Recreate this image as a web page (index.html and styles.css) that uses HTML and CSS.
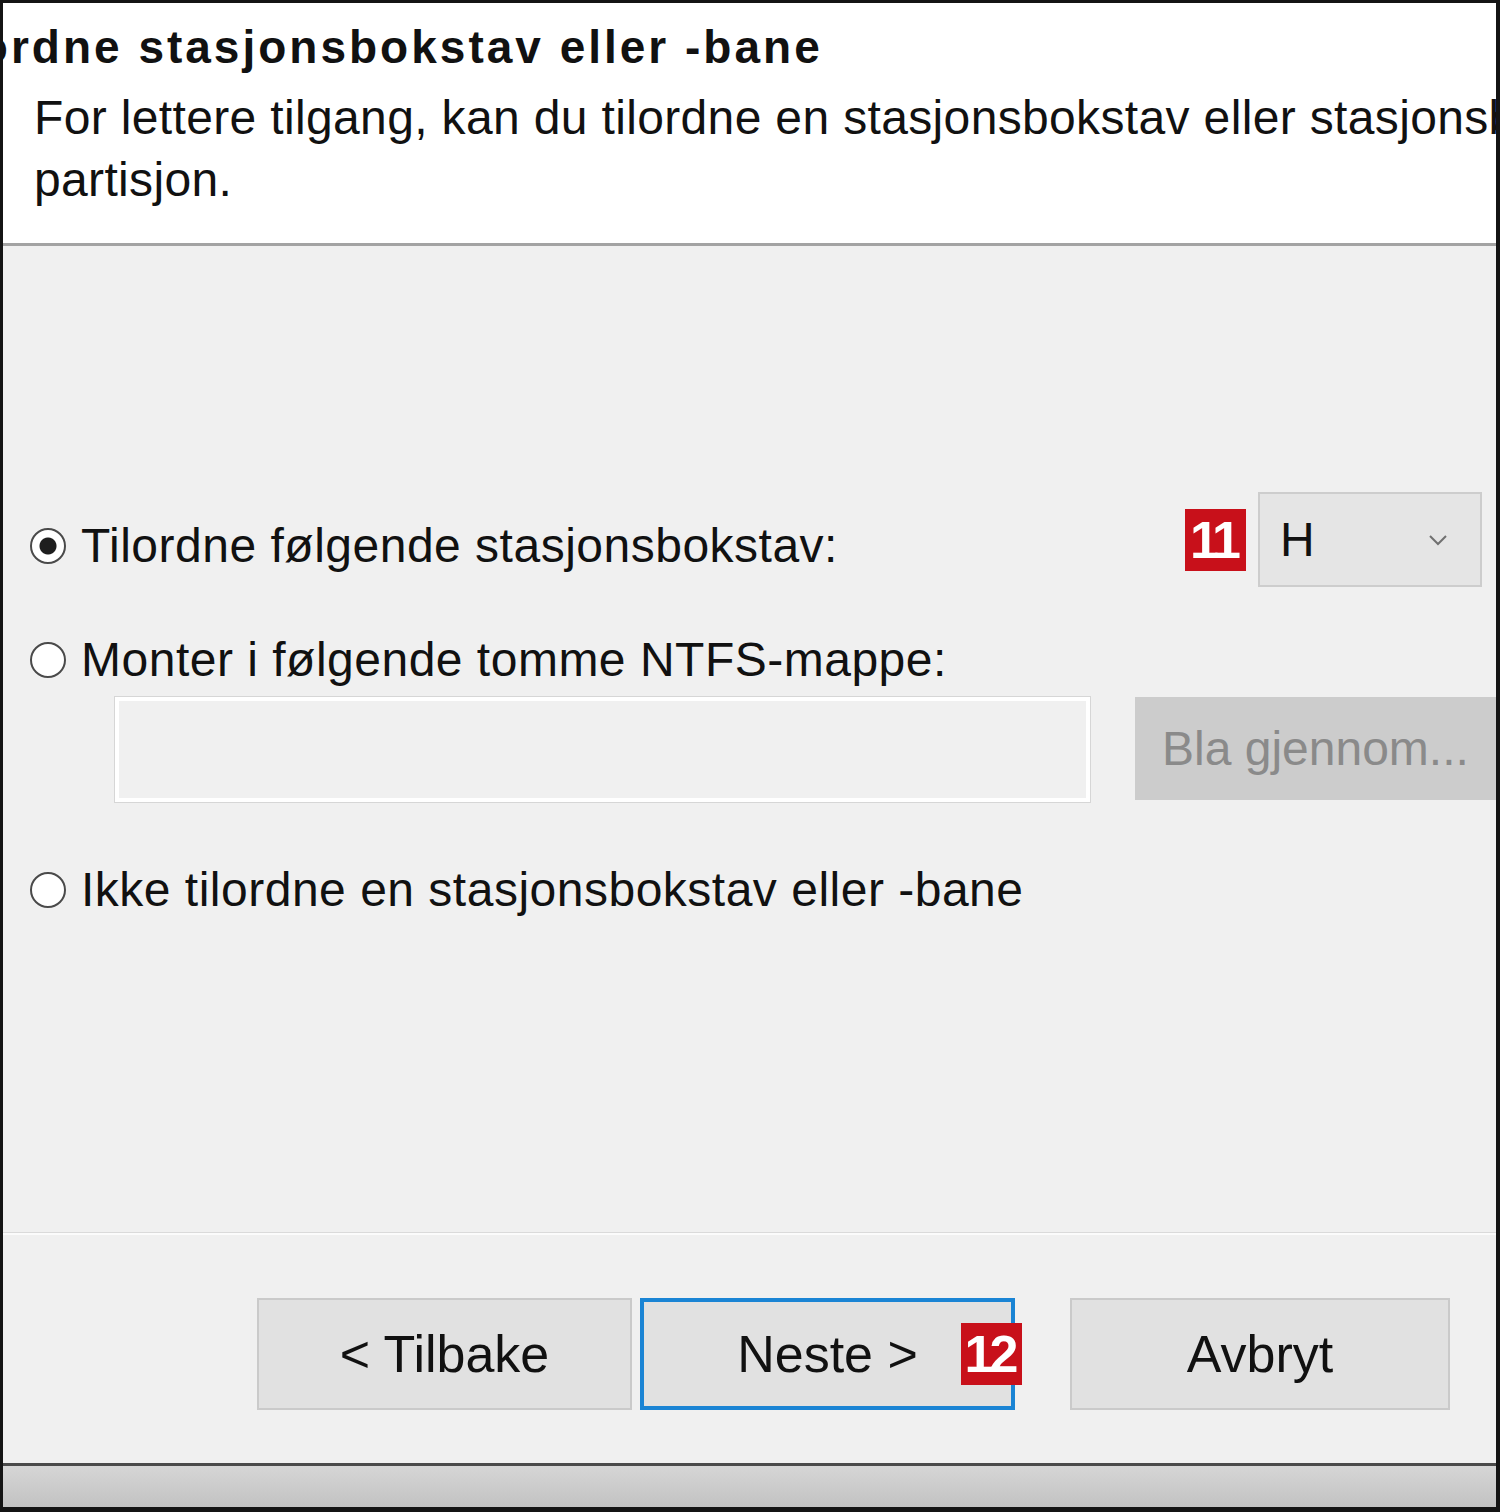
FILE: index.html
```html
<!DOCTYPE html>
<html lang="nb">

<head>
    <meta charset="UTF-8">
    <meta name="viewport" content="width=device-width, initial-scale=1.0">
    <title>Tilordne stasjonsbokstav eller -bane</title>
    <link rel="stylesheet" href="styles.css">
</head>

<body>
    <div class="dialog">
        <header class="head">
            <h1 class="title">Tilordne stasjonsbokstav eller -bane</h1>
            <p class="desc">For lettere tilgang, kan du tilordne en stasjonsbokstav eller stasjonsbane til denne<br>partisjon.</p>
        </header>

        <main class="body">
            <div class="row-letter">
                <label class="opt opt-letter"><span class="radio checked"></span>Tilordne følgende stasjonsbokstav:</label>
                <span class="badge">11</span>
                <div class="combo">
                    <span>H</span>
                    <svg width="20" height="12" viewBox="0 0 20 12"><polyline points="2,2 10,10 18,2" fill="none" stroke="#707070" stroke-width="2"/></svg>
                </div>
            </div>
            <label class="opt opt-mount"><span class="radio"></span>Monter i følgende tomme NTFS-mappe:</label>
            <div class="row-path">
                <div class="path-input"></div>
                <button class="browse">Bla gjennom...</button>
            </div>
            <label class="opt opt-none"><span class="radio"></span>Ikke tilordne en stasjonsbokstav eller -bane</label>
        </main>

        <footer class="foot">
            <button class="btn">&lt; Tilbake</button>
            <button class="btn btn-default">Neste &gt;<span class="badge badge-next">12</span></button>
            <button class="btn btn-cancel">Avbryt</button>
        </footer>

        <div class="taskbar"></div>
    </div>
</body>

</html>
```

FILE: styles.css
```css
body {
    margin: 0;
    padding: 0;
    background: #141414;
}

.dialog {
    width: 1500px;
    height: 1512px;
    box-sizing: border-box;
    border: 3px solid #141414;
    border-right-width: 4px;
    border-bottom-width: 5px;
    display: flex;
    flex-direction: column;
    overflow: hidden;
    background: #f0f0f0;
    font-family: "Liberation Sans", Arial, sans-serif;
    color: #111;
}

/* header */

.head {
    flex: none;
    height: 240px;
    background: #fff;
    border-bottom: 3px solid #a3a3a3;
    overflow: hidden;
    white-space: nowrap;
}

.title {
    margin: 16px 0 0 -85px;
    font-size: 46px;
    line-height: 56px;
    font-weight: bold;
    letter-spacing: 3px;
}

.desc {
    margin: 12px 0 0 31px;
    font-size: 48px;
    line-height: 62px;
    letter-spacing: 0.35px;
}

/* options */

.body {
    flex: 1;
    padding-top: 246px;
}

.row-letter {
    display: flex;
    align-items: center;
    height: 95px;
    padding-right: 14px;
}

.opt {
    display: flex;
    align-items: center;
    gap: 15px;
    padding-left: 27px;
    font-size: 48px;
    line-height: 60px;
    letter-spacing: 0.5px;
    white-space: nowrap;
}

.opt-letter {
    margin-top: 13px;
    margin-right: auto;
}

.opt-mount {
    margin-top: 43px;
}

.opt-none {
    margin-top: 58px;
}

.radio {
    flex: none;
    width: 36px;
    height: 36px;
    box-sizing: border-box;
    border: 2px solid #4a4a4a;
    border-radius: 50%;
    background: #fff;
}

.radio.checked {
    background: radial-gradient(circle, #1e1e1e 0 8px, #fff 9px);
}

.badge {
    flex: none;
    width: 61px;
    height: 62px;
    display: flex;
    align-items: center;
    justify-content: center;
    margin-right: 12px;
    background: #c8101a;
    color: #fff;
    font-weight: bold;
    font-size: 52px;
    letter-spacing: -4px;
    text-indent: -4px;
}

.combo {
    flex: none;
    width: 224px;
    height: 95px;
    box-sizing: border-box;
    display: flex;
    align-items: center;
    justify-content: space-between;
    padding: 0 32px 0 20px;
    border: 2px solid #cdcdcd;
    background: #e5e5e5;
    font-size: 48px;
}

.row-path {
    display: flex;
    gap: 45px;
    margin-top: 7px;
    padding-left: 112px;
}

.path-input {
    flex: none;
    width: 975px;
    height: 105px;
    box-sizing: border-box;
    border: 4px solid #fff;
    box-shadow: 0 0 0 1px #d6d6d6;
    background: #f0f0f0;
}

.browse {
    flex: none;
    width: 400px;
    height: 103px;
    padding: 0 0 0 27px;
    border: none;
    background: #cccccc;
    color: #8a8a8a;
    font: 48px "Liberation Sans", Arial, sans-serif;
    text-align: left;
}

/* buttons */

.foot {
    flex: none;
    height: 231px;
    box-sizing: border-box;
    display: flex;
    justify-content: flex-end;
    align-items: flex-start;
    padding: 65px 46px 0 0;
    border-top: 1px solid #dadada;
    box-shadow: inset 0 2px #fbfbfb;
}

.btn {
    position: relative;
    width: 375px;
    height: 112px;
    box-sizing: border-box;
    border: 2px solid #cacaca;
    background: #e1e1e1;
    color: #111;
    font: 52px/1 "Liberation Sans", Arial, sans-serif;
}

.btn-default {
    margin-left: 8px;
    border: 4px solid #1a84d4;
}

.btn-cancel {
    width: 380px;
    margin-left: 55px;
}

.badge-next {
    position: absolute;
    right: -11px;
    top: 21px;
    margin: 0;
}

.taskbar {
    flex: none;
    height: 44px;
    box-sizing: border-box;
    border-top: 3px solid #4a4a4a;
    background: linear-gradient(#d6d6d6, #c2c2c2);
}
```
